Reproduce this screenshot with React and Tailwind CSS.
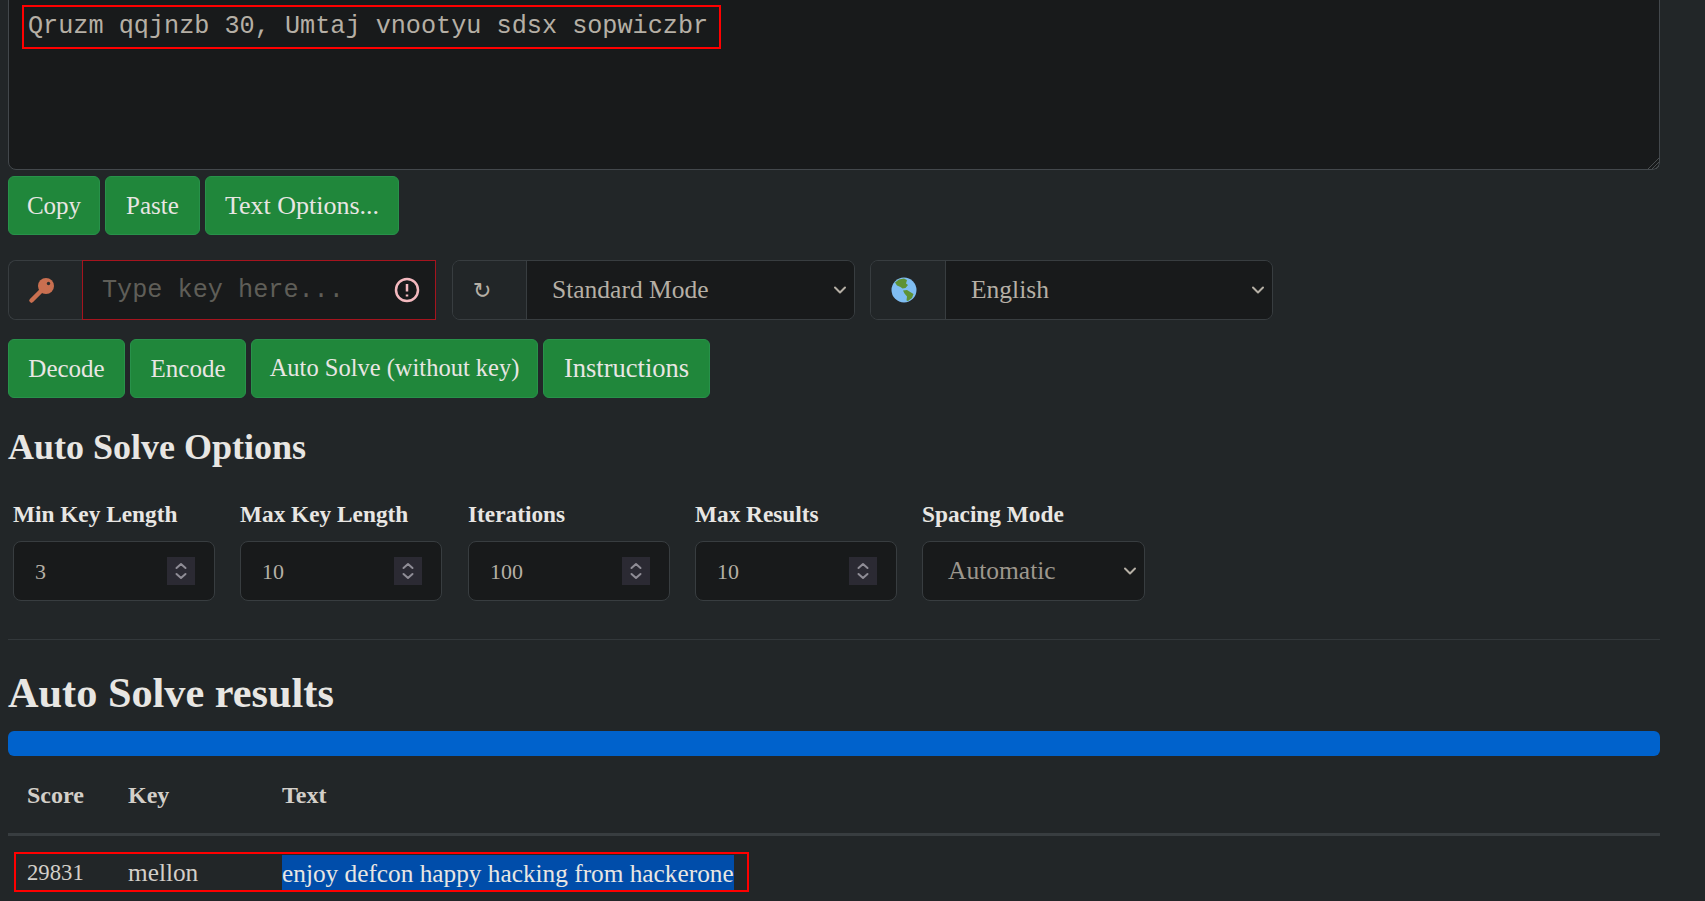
const serif = "font-['Liberation_Serif',serif]";

function Btn({ w, size = "text-[25px]", children }) {
  return (
    <div className={`h-[59px] flex items-center justify-center rounded-md border border-[#28924a] bg-[#20873b] text-[#e8e6e3] ${size} ${w}`}>
      {children}
    </div>
  );
}

function Chevron({ className = "" }) {
  return (
    <svg viewBox="0 0 16 16" className={`w-4 h-4 ${className}`} fill="none" stroke="#b5afa5" strokeWidth="2" strokeLinecap="round" strokeLinejoin="round">
      <path d="M3 5.500l5 5 5-5" />
    </svg>
  );
}

function Key() {
  return (
    <svg viewBox="0 0 32 32" className="w-8 h-8">
      <circle cx="20" cy="12" r="8" fill="#c96f50" />
      <path d="M15 17L5.500 26.500" stroke="#c96f50" strokeWidth="4.500" strokeLinecap="round" />
      <circle cx="22.500" cy="9.500" r="1.700" fill="#2a2c2d" />
    </svg>
  );
}

function Globe() {
  return (
    <svg viewBox="0 0 26 26" className="w-[26px] h-[26px]">
      <circle cx="13" cy="13" r="12.500" fill="#7fbdf2" />
      <path d="M4 5.500L8 2.500L13 1.500L16 3L15 6.500L17 8L14.500 11L11.500 11.500L9.500 10L6 8.500Z" fill="#5f9235" />
      <path d="M12 13.500L16 13L20 15.500L22.500 17L21 21L17 24L15.500 23.500L16 19.500L13.500 16.500Z" fill="#5f9235" />
    </svg>
  );
}

function Spinner() {
  return (
    <div className="w-[28px] h-[28px] bg-[#2b2a33] flex flex-col items-center justify-center">
      <svg viewBox="0 0 16 20" className="w-4 h-5" fill="none" stroke="#8f8d96" strokeWidth="2" strokeLinecap="round" strokeLinejoin="round">
        <path d="M3.500 7L8 3l4.500 4" />
        <path d="M3.500 13L8 17l4.500-4" />
      </svg>
    </div>
  );
}

function NumField({ label, value, ml }) {
  return (
    <div className={`w-[202px] ${ml}`}>
      <div className="h-[40px] flex items-start text-[23.300px] leading-[26px] font-bold text-[#e8e6e3]">{label}</div>
      <div className="h-[60px] rounded-lg border border-[#383d40] bg-[#181a1b] flex items-center justify-between pl-[21px] pr-[19px] text-[22px] text-[#b5afa5]">
        <span>{value}</span>
        <Spinner />
      </div>
    </div>
  );
}

function SelectGroup({ addon, text, ml, addonW }) {
  return (
    <div className={`h-[60px] w-[403px] flex rounded-lg border border-[#383d40] overflow-hidden ${ml}`}>
      <div className={`h-full flex items-center pl-[20px] border-r border-[#383d40] bg-[#222628] ${addonW}`}>{addon}</div>
      <div className="flex-1 h-full bg-[#181a1b] flex items-center justify-between pl-[25px] pr-[6px] text-[25.500px] text-[#b5afa5]">
        <span className="pt-[1px]">{text}</span>
        <Chevron />
      </div>
    </div>
  );
}

export default function App() {
  return (
    <div className={`${serif} bg-[#222628] h-[901px] overflow-hidden pl-2 w-[1705px]`}>
      <div className="relative -mt-2 w-[1652px] h-[178px] rounded-lg border border-[#43484c] bg-[#181a1b] pt-[12px] pl-[13px]">
        <div className="inline-block h-[44px] w-[699px] border-2 border-[#ff0000] pl-[4px] font-['Liberation_Mono',monospace] text-[25.200px] leading-[40px] text-[#b5afa5] whitespace-nowrap">
          Qruzm qqjnzb 30, Umtaj vnootyu sdsx sopwiczbr
        </div>
        <svg viewBox="0 0 11 11" className="absolute right-0 bottom-0 w-[11px] h-[11px]" stroke="#4a4e50" strokeWidth="1">
          <path d="M0 11L11 0M4 11L11 4M8 11L11 8" />
        </svg>
      </div>

      <div className="flex gap-[5px] mt-[6px]">
        <Btn w="w-[92px]">Copy</Btn>
        <Btn w="w-[95px]">Paste</Btn>
        <Btn w="w-[194px]" size="text-[26px]">Text Options...</Btn>
      </div>

      <div className="flex mt-[25px]">
        <div className="h-[60px] w-[428px] flex rounded-l-lg border-y border-l border-[#383d40]">
          <div className="w-[73px] flex items-center pl-[17px] bg-[#222628] rounded-l-lg"><Key /></div>
          <div className="flex-1 border border-[#a5141e] bg-[#181a1b] flex items-center justify-between pl-[19px] pr-[15px] font-['Liberation_Mono',monospace] text-[25.200px] text-[#5f5e58] -my-px">
            <span className="pt-[1px]">Type key here...</span>
            <svg viewBox="0 0 26 26" className="w-[26px] h-[26px]" fill="none" stroke="#f4b9bf" strokeWidth="2.500">
              <circle cx="13" cy="13" r="11" />
              <path d="M13 7v7.500M13 17.500v2" />
            </svg>
          </div>
        </div>
        <SelectGroup ml="ml-[16px]" addonW="w-[74px]" text="Standard Mode"
          addon={<span className="font-['DejaVu_Sans',sans-serif] text-[22px] text-[#b5afa5]">↻</span>} />
        <SelectGroup ml="ml-[15px]" addonW="w-[75px]" text="English" addon={<Globe />} />
      </div>

      <div className="flex gap-[5px] mt-[19px]">
        <Btn w="w-[117px]">Decode</Btn>
        <Btn w="w-[116px]">Encode</Btn>
        <Btn w="w-[287px]" size="text-[24.500px]">Auto Solve (without key)</Btn>
        <Btn w="w-[167px]" size="text-[26.500px]">Instructions</Btn>
      </div>

      <h3 className="mt-[29px] h-[40px] text-[36px] leading-[40px] font-bold text-[#e8e6e3]">Auto Solve Options</h3>

      <div className="flex ml-[5px] mt-[34px]">
        <NumField label="Min Key Length" value="3" />
        <NumField label="Max Key Length" value="10" ml="ml-[25px]" />
        <NumField label="Iterations" value="100" ml="ml-[26px]" />
        <NumField label="Max Results" value="10" ml="ml-[25px]" />
        <div className="w-[223px] ml-[25px]">
          <div className="h-[40px] text-[23.300px] leading-[26px] font-bold text-[#e8e6e3]">Spacing Mode</div>
          <div className="h-[60px] rounded-lg border border-[#383d40] bg-[#181a1b] flex items-center justify-between pl-[25px] pr-[6px] text-[25.500px] text-[#9d978d]">
            <span>Automatic</span>
            <Chevron />
          </div>
        </div>
      </div>

      <div className="w-[1652px] h-px bg-[#33383b] mt-[38px]"></div>

      <h2 className="mt-[28px] h-[50px] text-[42.300px] leading-[50px] font-bold text-[#e8e6e3]">Auto Solve results</h2>

      <div className="w-[1652px] h-[25px] rounded-md bg-[#0062cc] mt-[13px]"></div>

      <div className="w-[1652px] h-[80px] flex items-center pl-[19px] text-[24px] font-bold text-[#d3cfc9] border-b-[3px] border-[#383d40]">
        <div className="w-[101px]">Score</div>
        <div className="w-[154px]">Key</div>
        <div>Text</div>
      </div>

      <div className="ml-[6px] mt-[16px] w-[735px] h-[40px] border-2 border-[#ff0000] flex items-center pl-[11px] text-[25.300px] text-[#d3cfc9]">
        <div className="w-[101px] text-[22.700px] pt-[2px]">29831</div>
        <div className="w-[154px] pt-[2px]">mellon</div>
        <div className="h-[35px] leading-[36px] bg-[#004daa] text-[#e8e6e3] whitespace-nowrap">enjoy defcon happy hacking from hackerone</div>
      </div>
    </div>
  );
}
